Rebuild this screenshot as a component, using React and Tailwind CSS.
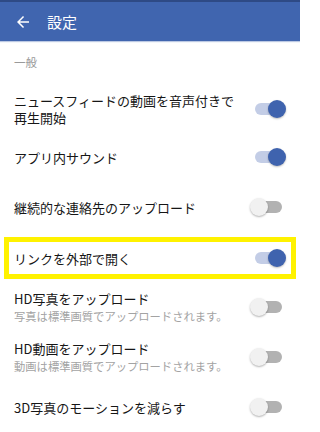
import React from "react";

const font = { fontFamily: '"Noto Sans CJK JP", "Noto Sans", sans-serif' };

function Toggle({ on }) {
  return (
    <div className="relative w-[36px] h-[18px] shrink-0 flex items-center justify-center">
      <div className={`w-[27px] h-[12px] rounded-full ${on ? "bg-[#c3cde6]" : "bg-[#b2b2b2]"}`} />
      <div
        className={`absolute top-0 w-[18px] h-[18px] rounded-full ${
          on ? "right-0 bg-[#3f63ae] shadow-[0_1px_2px_rgba(0,0,0,0.25)]" : "left-0 bg-[#f1f1f1] shadow-[0_1px_2px_rgba(0,0,0,0.3)]"
        }`}
      />
    </div>
  );
}

function Row({ title, sub, on, className = "h-[50px]" }) {
  return (
    <div className={`flex items-center pl-[14px] pr-[14px] ${className}`}>
      <div className="flex-1 min-w-0">
        <div className="text-[13px] leading-[17px] text-[#161616]">{title}</div>
        {sub && <div className="text-[11.3px] leading-[18px] text-[#a3a3a3]">{sub}</div>}
      </div>
      <Toggle on={on} />
    </div>
  );
}

export default function App() {
  return (
    <div className="w-[300px] h-[432px] bg-white overflow-hidden" style={font}>
      <div className="h-[2px] bg-[#2e4a85]" />
      <div className="h-[39px] bg-[#4065af] flex items-center shadow-[0_1px_1px_rgba(64,101,175,0.35)]">
        <svg width="18" height="18" viewBox="0 0 24 24" className="ml-[14px]" fill="white">
          <path d="M20 11H7.83l5.59-5.59L12 4l-8 8 8 8 1.41-1.41L7.83 13H20v-2z" />
        </svg>
        <span className="ml-[15px] text-white text-[15px] leading-none">設定</span>
      </div>
      <div className="h-[44px] flex items-center pl-[14px] text-[11.5px] text-[#9a9a9a]">一般</div>
      <div className="flex items-center pl-[14px] pr-[14px] h-[47px]">
        <div className="flex-1 min-w-0 text-[13px] leading-[17px] text-[#161616]">
          <div>ニュースフィードの動画を音声付きで</div>
          <div>再生開始</div>
        </div>
        <Toggle on />
      </div>
      <Row title="アプリ内サウンド" on />
      <Row title="継続的な連絡先のアップロード" on={false} />
      <div className="h-[50px] pt-[5px] pb-[3px] px-[4px]">
        <div className="h-full border-[5px] border-[#fff200] flex items-center pl-[5px] pr-[5px]">
          <div className="flex-1 text-[13px] leading-[17px] text-[#161616]">リンクを外部で開く</div>
          <Toggle on />
        </div>
      </div>
      <Row title="HD写真をアップロード" sub="写真は標準画質でアップロードされます。" on={false} />
      <Row title="HD動画をアップロード" sub="動画は標準画質でアップロードされます。" on={false} />
      <Row title="3D写真のモーションを減らす" on={false} />
    </div>
  );
}
